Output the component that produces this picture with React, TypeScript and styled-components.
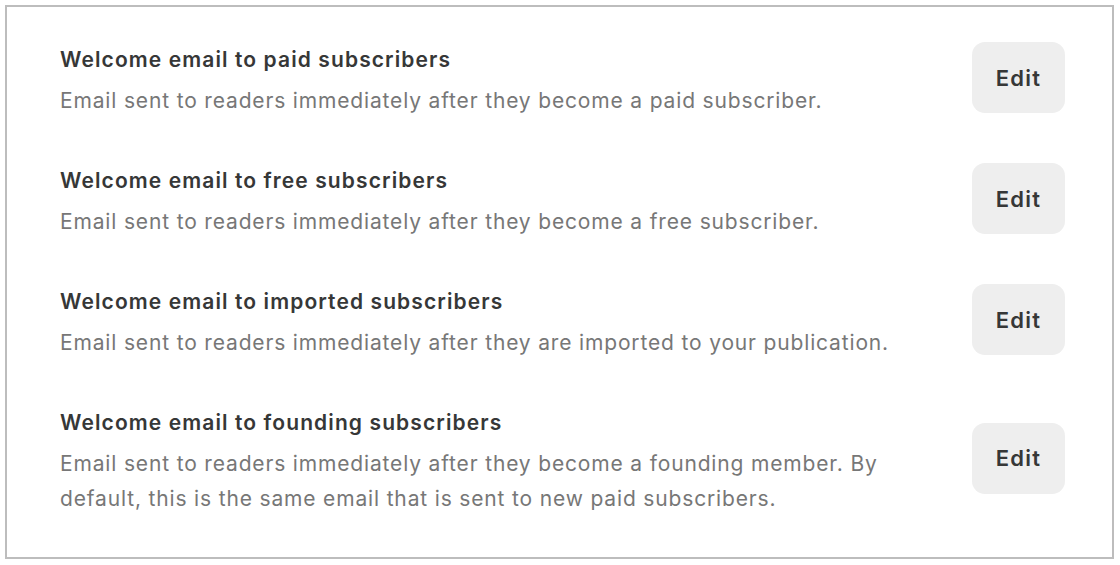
import React from "react";
import styled, { createGlobalStyle } from "styled-components";

const GlobalStyle = createGlobalStyle`
  html, body {
    margin: 0;
    padding: 0;
    background: #ffffff;
  }
  body {
    font-family: Inter, "Noto Sans", "Liberation Sans", sans-serif;
    -webkit-font-smoothing: antialiased;
  }
`;

const Page = styled.div`
  padding: 5px;
  width: 1120px;
  height: 565px;
  box-sizing: border-box;
`;

const Panel = styled.section`
  box-sizing: border-box;
  width: 1109px;
  height: 554px;
  border: 2px solid #bdbdbd;
  padding: 31px 47px 0 53px;
  display: flex;
  flex-direction: column;
  gap: 41.5px;
`;

const Row = styled.div`
  display: flex;
  align-items: center;
  justify-content: space-between;
  gap: 60px;
`;

const Texts = styled.div`
  flex: 1;
  min-width: 0;
  padding-top: 8px;
  display: flex;
  flex-direction: column;
  gap: 8.5px;
`;

const Title = styled.div`
  font-size: 21px;
  line-height: 28px;
  font-weight: 600;
  color: #363737;
  letter-spacing: 1.1px;
  white-space: nowrap;
`;

const Description = styled.div`
  font-size: 21px;
  line-height: 35px;
  font-weight: 400;
  color: #777777;
  letter-spacing: 0.84px;
`;

const EditButton = styled.button`
  flex: none;
  width: 93px;
  height: 71px;
  border: none;
  border-radius: 13px;
  background: #eeeeee;
  color: #363737;
  font-family: inherit;
  font-size: 22px;
  font-weight: 600;
  letter-spacing: 1.2px;
  cursor: pointer;
  padding: 0;
`;

const items = [
  {
    title: "Welcome email to paid subscribers",
    desc: "Email sent to readers immediately after they become a paid subscriber.",
  },
  {
    title: "Welcome email to free subscribers",
    desc: "Email sent to readers immediately after they become a free subscriber.",
  },
  {
    title: "Welcome email to imported subscribers",
    desc: "Email sent to readers immediately after they are imported to your publication.",
  },
  {
    title: "Welcome email to founding subscribers",
    desc: "Email sent to readers immediately after they become a founding member. By default, this is the same email that is sent to new paid subscribers.",
  },
];

export default function App() {
  return (
    <>
      <GlobalStyle />
      <Page>
        <Panel>
          {items.map((it) => (
            <Row key={it.title}>
              <Texts>
                <Title>{it.title}</Title>
                <Description>{it.desc}</Description>
              </Texts>
              <EditButton>Edit</EditButton>
            </Row>
          ))}
        </Panel>
      </Page>
    </>
  );
}
